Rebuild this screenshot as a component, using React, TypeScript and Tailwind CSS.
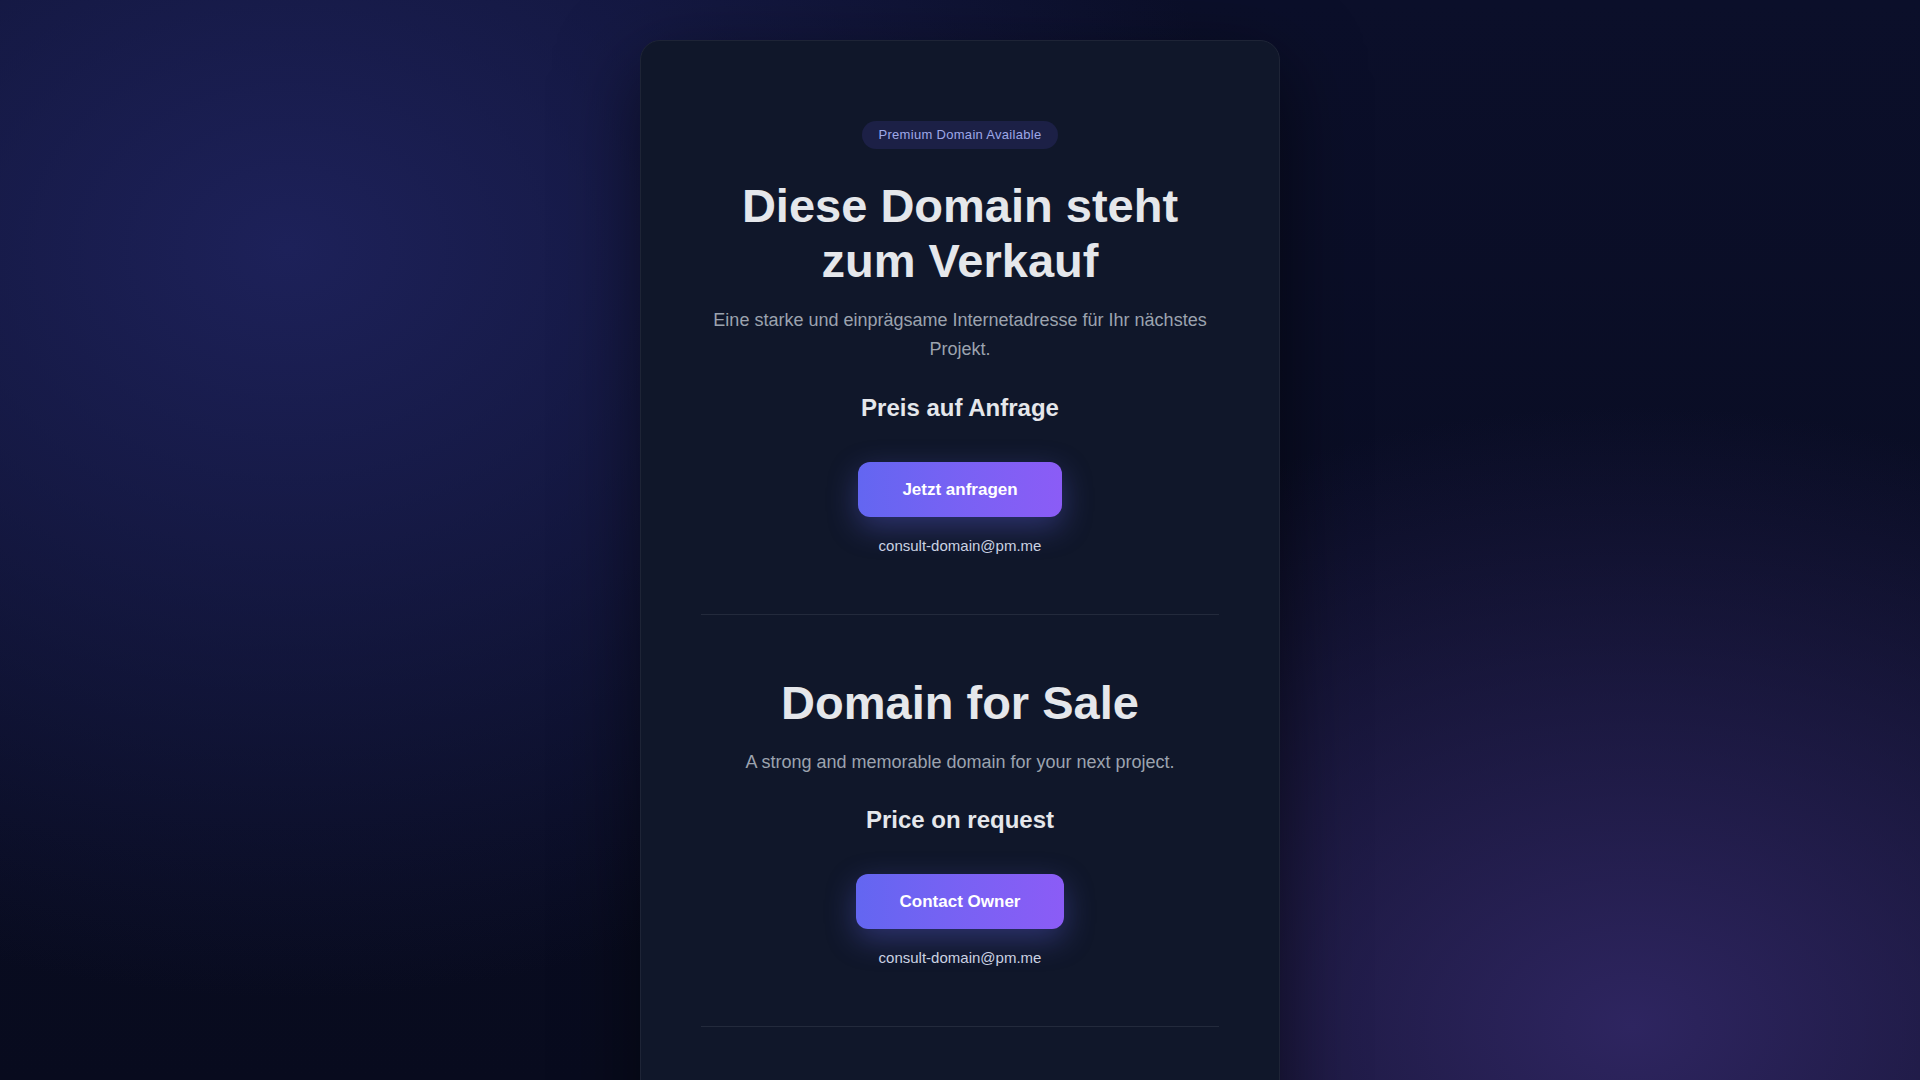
import React from "react";

interface SaleSectionProps {
  badge?: string;
  title: string;
  subtitle: string;
  price: string;
  cta: string;
  email: string;
}

function SaleSection({ badge, title, subtitle, price, cta, email }: SaleSectionProps) {
  return (
    <section className="flex flex-col items-center pt-[60px] pb-[57px] text-center">
      {badge && (
        <span className="mb-[29px] rounded-full bg-[#1c2046] px-4 py-[5px] text-[13px] leading-[18px] tracking-[0.3px] text-[#9ea8e8]">
          {badge}
        </span>
      )}
      <h1 className="mb-[18px] text-[47px] font-bold leading-[55px] text-[#e5e7eb]">{title}</h1>
      <p className="mb-[26px] text-[18px] leading-[28.8px] text-[#9ca3af]">{subtitle}</p>
      <div className="mb-[36px] text-[24px] font-bold leading-[36px] text-[#e5e7eb]">{price}</div>
      <a
        href={`mailto:${email}`}
        className="mb-[18px] rounded-xl bg-gradient-to-r from-[#6366f1] to-[#8b5cf6] px-[44px] py-[15px] text-[17px] font-bold leading-[25px] text-white shadow-[0_10px_30px_rgba(99,102,241,0.35)]"
      >
        {cta}
      </a>
      <a href={`mailto:${email}`} className="text-[15px] leading-[22px] text-[#cbd2e3]">
        {email}
      </a>
    </section>
  );
}

export default function App() {
  return (
    <div className="min-h-screen bg-[#090d20] bg-fixed bg-[radial-gradient(950px_750px_at_15%_23%,rgba(30,34,92,0.95),transparent),radial-gradient(850px_620px_at_85%_95%,rgba(46,37,96,1),transparent),linear-gradient(180deg,#0b0f2a,#080b1e)] font-['Liberation_Sans',Arial,sans-serif]">
      <div className="flex justify-center pt-10 pb-10">
        <main className="w-[640px] rounded-[20px] border border-[#1e2436] bg-[#10172a] px-[60px] pt-5 shadow-[0_25px_80px_rgba(0,0,0,0.55)]">
          <SaleSection
            badge="Premium Domain Available"
            title="Diese Domain steht zum Verkauf"
            subtitle="Eine starke und einprägsame Internetadresse für Ihr nächstes Projekt."
            price="Preis auf Anfrage"
            cta="Jetzt anfragen"
            email="consult-domain@pm.me"
          />
          <hr className="border-0 border-t border-[#232a3c]" />
          <SaleSection
            title="Domain for Sale"
            subtitle="A strong and memorable domain for your next project."
            price="Price on request"
            cta="Contact Owner"
            email="consult-domain@pm.me"
          />
          <hr className="border-0 border-t border-[#232a3c]" />
          <SaleSection
            title="Dominio en venta"
            subtitle="Un dominio fuerte y memorable para tu próximo proyecto."
            price="Precio a consultar"
            cta="Contactar"
            email="consult-domain@pm.me"
          />
        </main>
      </div>
    </div>
  );
}
